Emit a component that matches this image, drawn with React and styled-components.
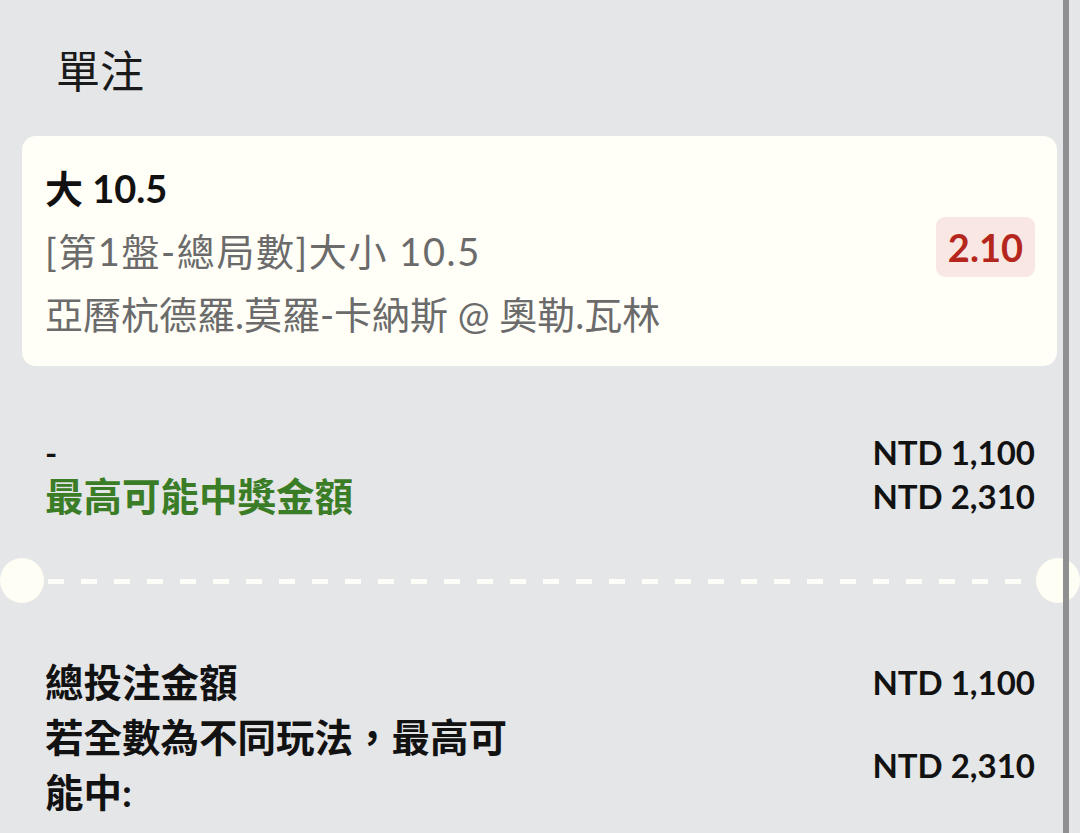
import React from 'react'
import styled, { createGlobalStyle } from 'styled-components';

const GlobalStyle = createGlobalStyle`
    body {
        margin: 0;
        background: #e5e6e8;
        font-family: Lato, "Noto Sans CJK TC", sans-serif;
        color: #151515;
    }
`;

export const Page = styled.div`
    position: relative;
    width: 1080px;
    height: 833px;
    overflow: hidden;
    background: #e5e6e8;
`;

// the grey scroll edge that lies over the panel
export const Edge = styled.div`
    position: absolute;
    top: 0;
    bottom: 0;
    left: 1063px;
    width: 6px;
    background: #8f8f92;
`;

export const Title = styled.h1`
    margin: 0;
    padding: 43px 0 0 56px;
    height: 93px;
    font-size: 44px;
    font-weight: 400;
    line-height: 56px;
    color: #1a1a1a;
`;

export const Card = styled.div`
    display: flex;
    align-items: center;
    justify-content: space-between;
    margin: 0 23px 0 22px;
    padding: 21px 22px 20px 23px;
    background: #fffef7;
    border-radius: 14px;
`;

export const Lines = styled.div`
    display: flex;
    flex-direction: column;
`;

export const Line = styled.div`
    font-size: 38px;
    line-height: 63px;
    letter-spacing: ${({ spread }) => spread ? '1.6px' : 'normal'};
    font-weight: ${({ strong }) => strong ? 700 : 400};
    color: ${({ strong }) => strong ? '#111' : '#6b6b6b'};
    white-space: nowrap;
`;

export const Odds = styled.div`
    margin-bottom: 10px;
    height: 60px;
    padding: 0 12px;
    display: flex;
    align-items: center;
    background: #f8e7e2;
    border-radius: 9px;
    color: #b5271d;
    font-size: 38px;
    font-weight: 700;
`;

export const Section = styled.div`
    display: flex;
    flex-direction: column;
    padding: ${({ pad }) => pad};
`;

export const Row = styled.div`
    display: flex;
    align-items: center;
    justify-content: space-between;
    line-height: ${({ lh }) => lh}px;
`;

export const Label = styled.div`
    max-width: 490px;
    font-size: ${({ small }) => small ? 33 : 38.5}px;
    font-weight: 700;
    color: ${({ green }) => green ? '#3a7d26' : '#121212'};
`;

export const Amount = styled.div`
    font-size: 33px;
    font-weight: 700;
    color: #121212;
    white-space: nowrap;
`;

export const Divider = styled.div`
    display: flex;
    align-items: center;
    height: 45px;
`;

export const Hole = styled.div`
    flex: none;
    width: 44px;
    height: 45px;
    border-radius: 50%;
    background: #fffef5;
`;

export const Dashes = styled.div`
    flex: 1;
    height: 5px;
    margin: 2px 6px 0 4px;
    background: repeating-linear-gradient(90deg, #fefef8 0 16px, transparent 16px 33px);
`;

const App = () => {
    return (
        <Page>
            <GlobalStyle />
            <Title>單注</Title>
            <Card>
                <Lines>
                    <Line strong>大 10.5</Line>
                    <Line spread>[第1盤-總局數]大小 10.5</Line>
                    <Line>亞曆杭德羅.莫羅-卡納斯 @ 奧勒.瓦林</Line>
                </Lines>
                <Odds>2.10</Odds>
            </Card>
            <Section pad="64px 45px 40px 45px">
                <Row lh={44}>
                    <Label small>-</Label>
                    <Amount>NTD 1,100</Amount>
                </Row>
                <Row lh={44}>
                    <Label green>最高可能中獎金額</Label>
                    <Amount>NTD 2,310</Amount>
                </Row>
            </Section>
            <Divider>
                <Hole />
                <Dashes />
                <Hole />
            </Divider>
            <Section pad="52px 45px 0 45px">
                <Row lh={55}>
                    <Label>總投注金額</Label>
                    <Amount>NTD 1,100</Amount>
                </Row>
                <Row lh={55}>
                    <Label>若全數為不同玩法，最高可能中:</Label>
                    <Amount>NTD 2,310</Amount>
                </Row>
            </Section>
            <Edge />
        </Page>
    )
}
export default App
